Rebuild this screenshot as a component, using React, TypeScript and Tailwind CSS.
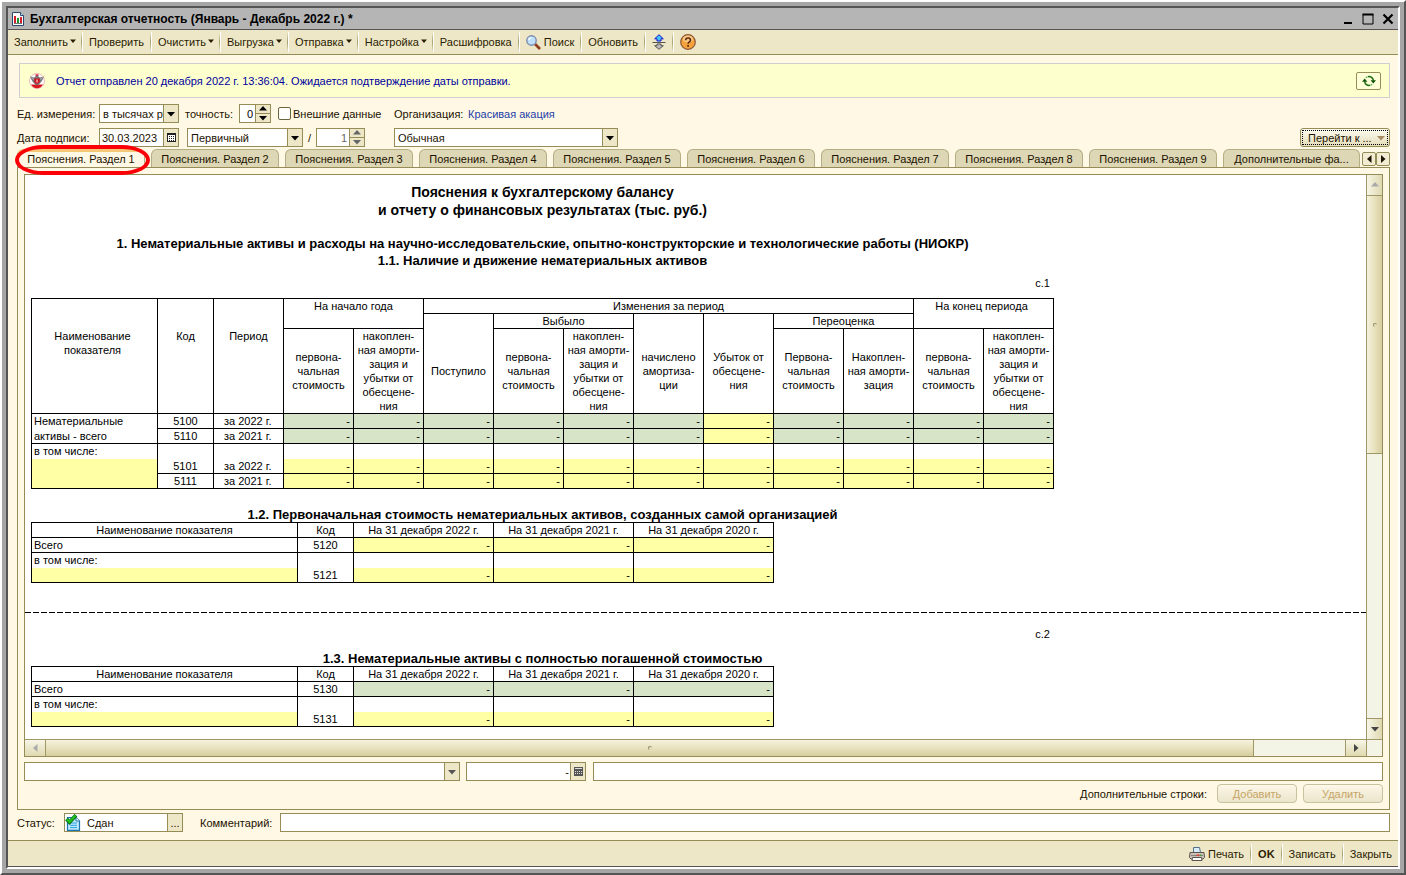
import { useState, type ReactNode } from "react";

type Fill = "green" | "yellow";

const TABS = [1, 2, 3, 4, 5, 6, 7, 8, 9].map((n) => `Пояснения. Раздел ${n}`);

const FILLS: Record<Fill, string> = {
  green: "bg-[#d7e4c8]",
  yellow: "bg-[#ffffa6]",
};

const CELL = "border-r border-b border-black";
const FIELD = "flex h-[19px] border border-[#968c58] bg-white";
const FIELD_BUTTON = "flex w-[15px] shrink-0 items-center justify-center border-l border-[#968c58] bg-[#ede7c8]";

function Triangle({ dir, className = "size-2" }: { dir: "up" | "down" | "left" | "right"; className?: string }) {
  const paths = {
    up: "M0 5.500h8L4 1z",
    down: "M0 2h8L4 6.500z",
    left: "M6.500 0v8L2 4z",
    right: "M2 0v8l4.500-4z",
  };
  return (
    <svg viewBox="0 0 8 8" className={`shrink-0 fill-current ${className}`}>
      <path d={paths[dir]} />
    </svg>
  );
}

function Separator() {
  return <span className="h-5 w-0.5 shrink-0 border-r border-white bg-linear-to-b from-[#ede7c8] via-[#a59d6a] to-[#ede7c8]" />;
}

function ToolButton({ children, menu, strong }: { children: ReactNode; menu?: boolean; strong?: boolean }) {
  return (
    <button
      type="button"
      className={`flex items-center whitespace-nowrap text-[#2b1c00] ${menu ? "gap-0.5 pr-[5px] pl-1.5" : "gap-[3px] px-1.5"} ${strong ? "font-bold" : ""}`}
    >
      {children}
      {menu && <Triangle dir="down" className="mb-0.5 size-1.5" />}
    </button>
  );
}

function SelectField({ label, options, className, muted }: { label: string; options: string[]; className: string; muted?: boolean }) {
  return (
    <div className={`${FIELD} ${className}`}>
      <select aria-label={label} className="min-w-0 flex-1 appearance-none overflow-hidden bg-white pl-[3px] outline-none">
        {options.map((option) => (
          <option key={option}>{option}</option>
        ))}
      </select>
      <span className={`${FIELD_BUTTON} ${muted ? "text-[#555]" : "text-black"}`}>
        <Triangle dir="down" />
      </span>
    </div>
  );
}

function Spinner({ id, label, value, className, muted }: { id?: string; label?: string; value: string; className: string; muted?: boolean }) {
  return (
    <div className={`${FIELD} ${className} ${muted ? "text-[#666]" : "text-black"}`}>
      <input id={id} aria-label={label} defaultValue={value} className="w-0 flex-1 pr-0.5 text-right outline-none" />
      <span className="flex w-[15px] flex-col border-l border-[#968c58] bg-[#ede7c8]">
        <button type="button" aria-label="Больше" className="flex flex-1 items-center justify-center border-b border-[#968c58]">
          <Triangle dir="up" />
        </button>
        <button type="button" aria-label="Меньше" className="flex flex-1 items-center justify-center">
          <Triangle dir="down" />
        </button>
      </span>
    </div>
  );
}

function ReportIcon() {
  return (
    <svg viewBox="0 0 12 14" className="h-3.5 w-3">
      <path d="M.5.5h8l3 3v10H.5z" fill="#fff" stroke="#2b4a6f" />
      <path d="M8.500.5v3h3" fill="#cfe0ee" stroke="#2b4a6f" />
      <path d="M2 4h2v7H2z" fill="#d3202a" />
      <path d="M5 6h2v5H5z" fill="#17902f" />
      <path d="M8 5h2v6H8z" fill="#d3202a" />
      <path d="M2 11.500h8" stroke="#777" />
    </svg>
  );
}

function SearchIcon() {
  return (
    <svg viewBox="0 0 15 15" className="size-[15px]">
      <path d="M9 9l5 5" stroke="#8f3d1d" strokeWidth="2.600" />
      <circle cx="5.500" cy="5.500" r="4.700" fill="#bfe0fb" stroke="#7d8cab" strokeWidth="1.400" />
      <path d="M2.800 5.200a3 3 0 012.600-2.600" stroke="#fff" strokeWidth="1.400" fill="none" />
    </svg>
  );
}

function ExpandIcon() {
  return (
    <svg viewBox="0 0 14 16" className="h-4 w-3.5">
      <path d="M7 .7l4.300 4.100H9v2.200H5V4.800H2.700z" fill="#45c2f5" stroke="#1414d2" />
      <path d="M.5 8.500h13" stroke="#555" />
      <path d="M7 15.300l4.300-3.600H9V10H5v1.700H2.700z" fill="#bbb" stroke="#555" />
    </svg>
  );
}

function HelpIcon() {
  return (
    <svg viewBox="0 0 16 16" className="size-4">
      <circle cx="8" cy="8" r="7.300" fill="#f6a23c" stroke="#8a5637" strokeWidth="1.200" />
      <ellipse cx="8" cy="5" rx="5.200" ry="3.600" fill="#fcd9a0" opacity=".7" />
      <path d="M5.700 6.200c0-3 4.800-3 4.800 0 0 1.700-2.400 1.700-2.400 3.600" fill="none" stroke="#5d2a12" strokeWidth="1.600" />
      <path d="M7.200 11h1.800v1.700H7.200z" fill="#5d2a12" />
    </svg>
  );
}

function EmblemIcon() {
  return (
    <svg viewBox="0 0 16 16" className="size-4">
      <circle cx="8" cy="8" r="7.500" fill="#fff" stroke="#f1b9b9" />
      <path d="M2 11.500h12A7 7 0 018 15.300 7 7 0 012 11.500z" fill="#d9161d" />
      <path d="M1 3.500l4.200 1L7 3h2l1.800 1.500L15 3.500l-1.500 3.200-1 1.800-1.300 1.500L9.500 12h-3L4.800 10 3.500 8.500l-1-1.800z" fill="#77777d" />
      <path d="M2.500 4.500l2.500 2M13.500 4.500l-2.500 2" stroke="#ddd" strokeWidth=".7" />
      <path d="M5.300 5.500h5.400V9L8 11.300 5.300 9z" fill="#d30f18" />
      <path d="M8 6.500v3" stroke="#fff" />
      <path d="M6.500 1.300h3v1.800h-3z" fill="#c9343a" />
    </svg>
  );
}

function RefreshIcon() {
  return (
    <svg viewBox="0 0 14 12" className="h-3 w-3.5">
      <path d="M2.700 6.500A4.300 4.300 0 008 10.300M11.300 5.500A4.300 4.300 0 006 1.700" fill="none" stroke="#1c6b12" strokeWidth="1.600" />
      <path d="M0 6.800h5.400L2.700 3.600zM8.600 5.200H14l-2.700 3.200z" fill="#0b5204" />
      <path d="M8.500 10.200l1.700-1M5.500 1.800l-1.700 1" stroke="#57a94b" strokeWidth="1.300" />
    </svg>
  );
}

function CalendarIcon() {
  return (
    <svg viewBox="0 0 9 9" className="size-[9px]" shapeRendering="crispEdges">
      <path d="M0 0h9v9H0z" fill="#222" />
      <path d="M1 2h7v6H1z" fill="#fff" />
      <path d="M2 3h1v1H2zM4 3h1v1H4zM6 3h1v1H6zM2 5h1v1H2zM4 5h1v1H4zM6 5h1v1H6zM2 7h1v1H2zM4 7h1v1H4zM6 7h1v1H6z" fill="#222" />
    </svg>
  );
}

function CalculatorIcon() {
  return (
    <svg viewBox="0 0 9 9" className="size-[9px]" shapeRendering="crispEdges">
      <path d="M0 0h9v9H0z" fill="#555" />
      <path d="M1 1h7v1H1zM1 4h1v1H1zM3 4h1v1H3zM5 4h1v1H5zM7 4h1v1H7zM1 6h1v1H1zM3 6h1v1H3zM5 6h1v1H5zM7 6h1v1H7z" fill="#ddd" />
    </svg>
  );
}

function StatusIcon() {
  return (
    <svg viewBox="0 0 16 17" className="h-[17px] w-4 shrink-0">
      <path d="M2.500 3.500h8.500l3.500 3.500v9.300h-12z" fill="#bfe9fd" stroke="#1b74ae" strokeWidth="1.200" />
      <path d="M11 3.500V7h3.500" fill="#fff" stroke="#1b74ae" />
      <path d="M5 9h7M5 11.300h7M5 13.600h7" stroke="#2ba0e2" />
      <path d="M1.500 5l3 3.300L11 1.200" fill="none" stroke="#0b6d10" strokeWidth="3.800" />
      <path d="M1.800 5.200l2.700 2.700 6-6.400" fill="none" stroke="#1fc41f" strokeWidth="2.200" />
    </svg>
  );
}

function PrinterIcon() {
  return (
    <svg viewBox="0 0 16 14" className="h-3.5 w-4">
      <path d="M4.500.5h6l1 5h-7z" fill="#d8ecfb" stroke="#55708c" />
      <path d="M1 5.500h14l.5 5-1.500 1.500H2L.5 10.500z" fill="#cdc6bd" stroke="#5b534c" />
      <path d="M2 8.500h12" stroke="#8b8178" strokeWidth="1.200" />
      <path d="M3.500 10.500h9l.5 3H3z" fill="#fff" stroke="#5b534c" />
      <path d="M7.500 7.500h3v1.300h-3z" fill="#e0392b" />
      <path d="M11 7.500h1.500v1.300H11z" fill="#39a93b" />
    </svg>
  );
}

function Values({ fills }: { fills: Fill[] }) {
  return (
    <>
      {fills.map((fill, i) => (
        <td key={i} className={`${CELL} ${FILLS[fill]} pr-[3px] text-right`}>
          -
        </td>
      ))}
    </>
  );
}

function BlankCells({ count }: { count: number }) {
  return (
    <>
      {Array.from({ length: count }, (_, i) => (
        <td key={i} className="border-r border-black" />
      ))}
    </>
  );
}

function Lines({ text }: { text: string }) {
  return (
    <>
      {text.split("|").map((line) => (
        <span key={line} className="block leading-[14px] whitespace-nowrap">
          {line}
        </span>
      ))}
    </>
  );
}

const TOTAL_FILLS: Fill[] = Array.from({ length: 11 }, (_, i) => (i === 6 ? "yellow" : "green"));
const DETAIL_FILLS: Fill[] = Array.from({ length: 11 }, () => "yellow");
const ACCUMULATED = "накоплен-|ная аморти-|зация и|убытки от|обесцене-|ния";

function AssetsTable() {
  const head = `${CELL} font-normal`;
  return (
    <table className="w-[1023px] table-fixed border-separate border-spacing-0 border-t border-l border-black leading-[14px]">
      <colgroup>
        <col className="w-[126px]" />
        <col className="w-14" />
        <col className="w-[70px]" />
        {TOTAL_FILLS.map((_, i) => (
          <col key={i} className="w-[70px]" />
        ))}
      </colgroup>
      <thead>
        <tr className="h-[15px]">
          <th rowSpan={3} className={`${head} pt-[30px] pr-1 align-top`}><Lines text="Наименование|показателя" /></th>
          <th rowSpan={3} className={`${head} pt-[30px] align-top`}>Код</th>
          <th rowSpan={3} className={`${head} pt-[30px] align-top`}>Период</th>
          <th colSpan={2} rowSpan={2} className={`${head} align-top`}>На начало года</th>
          <th colSpan={7} className={head}>Изменения за период</th>
          <th colSpan={2} rowSpan={2} className={`${head} pr-1 align-top`}>На конец периода</th>
        </tr>
        <tr className="h-[15px]">
          <th rowSpan={2} className={`${head} pt-[15px]`}>Поступило</th>
          <th colSpan={2} className={head}>Выбыло</th>
          <th rowSpan={2} className={`${head} pt-[15px]`}><Lines text="начислено|амортиза-|ции" /></th>
          <th rowSpan={2} className={`${head} pt-[15px]`}><Lines text="Убыток от|обесцене-|ния" /></th>
          <th colSpan={2} className={head}>Переоценка</th>
        </tr>
        <tr className="h-[85px]">
          <th className={head}><Lines text="первона-|чальная|стоимость" /></th>
          <th className={head}><Lines text={ACCUMULATED} /></th>
          <th className={head}><Lines text="первона-|чальная|стоимость" /></th>
          <th className={head}><Lines text={ACCUMULATED} /></th>
          <th className={head}><Lines text="Первона-|чальная|стоимость" /></th>
          <th className={head}><Lines text="Накоплен-|ная аморти-|зация" /></th>
          <th className={head}><Lines text="первона-|чальная|стоимость" /></th>
          <th className={head}><Lines text={ACCUMULATED} /></th>
        </tr>
      </thead>
      <tbody>
        <tr className="h-[15px]">
          <td className="border-r border-black pl-0.5 align-top">Нематериальные</td>
          <td className={`${CELL} text-center`}>5100</td>
          <td className={`${CELL} pl-2.5`}>за 2022 г.</td>
          <Values fills={TOTAL_FILLS} />
        </tr>
        <tr className="h-[15px]">
          <td className={`${CELL} pl-0.5`}>активы - всего</td>
          <td className={`${CELL} text-center`}>5110</td>
          <td className={`${CELL} pl-2.5`}>за 2021 г.</td>
          <Values fills={TOTAL_FILLS} />
        </tr>
        <tr className="h-[15px]">
          <td className="border-r border-black pl-0.5 align-top">в том числе:</td>
          <BlankCells count={13} />
        </tr>
        <tr className="h-[15px]">
          <td rowSpan={2} className={`${CELL} bg-[#ffffa6]`} />
          <td className={`${CELL} text-center`}>5101</td>
          <td className={`${CELL} pl-2.5`}>за 2022 г.</td>
          <Values fills={DETAIL_FILLS} />
        </tr>
        <tr className="h-[15px]">
          <td className={`${CELL} text-center`}>5111</td>
          <td className={`${CELL} pl-2.5`}>за 2021 г.</td>
          <Values fills={DETAIL_FILLS} />
        </tr>
      </tbody>
    </table>
  );
}

function CostTable({ total, detail, totalFill }: { total: string; detail: string; totalFill: Fill }) {
  return (
    <table className="w-[743px] table-fixed border-separate border-spacing-0 border-t border-l border-black leading-[14px]">
      <colgroup>
        <col className="w-[266px]" />
        <col className="w-14" />
        <col className="w-[140px]" />
        <col className="w-[140px]" />
        <col className="w-[140px]" />
      </colgroup>
      <thead>
        <tr className="h-[15px]">
          {["Наименование показателя", "Код", "На 31 декабря 2022 г.", "На 31 декабря 2021 г.", "На 31 декабря 2020 г."].map((title) => (
            <th key={title} className={`${CELL} font-normal`}>
              {title}
            </th>
          ))}
        </tr>
      </thead>
      <tbody>
        <tr className="h-[15px]">
          <td className={`${CELL} pl-0.5`}>Всего</td>
          <td className={`${CELL} text-center`}>{total}</td>
          <Values fills={[totalFill, totalFill, totalFill]} />
        </tr>
        <tr className="h-[15px]">
          <td className="border-r border-black pl-0.5 align-top">в том числе:</td>
          <BlankCells count={4} />
        </tr>
        <tr className="h-[15px]">
          <td className={`${CELL} bg-[#ffffa6]`} />
          <td className={`${CELL} text-center`}>{detail}</td>
          <Values fills={["yellow", "yellow", "yellow"]} />
        </tr>
      </tbody>
    </table>
  );
}

function ReportSheet() {
  return (
    <div className="min-w-0 flex-1 overflow-hidden bg-white text-black">
      <div className="w-[1029px] pl-1.5">
        <div className="pt-2 text-center text-[14px] leading-[18px] font-bold">
          <div>Пояснения к бухгалтерскому балансу</div>
          <div>и отчету о финансовых результатах (тыс. руб.)</div>
        </div>
        <div className="mt-4 text-center text-[13px] leading-[17px] font-bold">
          <div className="whitespace-nowrap">
            1. Нематериальные активы и расходы на научно-исследовательские, опытно-конструкторские и технологические работы (НИОКР)
          </div>
          <div>1.1. Наличие и движение нематериальных активов</div>
        </div>
        <div className="mt-[7px] mb-2 pr-1 text-right leading-[14px]">с.1</div>
        <AssetsTable />
        <div className="mt-[18px] text-center text-[13px] leading-[15px] font-bold">
          1.2. Первоначальная стоимость нематериальных активов, созданных самой организацией
        </div>
        <CostTable total="5120" detail="5121" totalFill="yellow" />
      </div>
      <div className="mt-[29px] h-px bg-[repeating-linear-gradient(90deg,#000_0_6px,transparent_6px_8px)]" />
      <div className="w-[1029px] pl-1.5">
        <div className="mt-3.5 mb-2.5 pr-1 text-right leading-[14px]">с.2</div>
        <div className="text-center text-[13px] leading-[15px] font-bold">1.3. Нематериальные активы с полностью погашенной стоимостью</div>
        <CostTable total="5130" detail="5131" totalFill="green" />
      </div>
    </div>
  );
}

function VerticalScrollbar() {
  const button = "flex h-[21px] items-center justify-center bg-linear-to-r from-[#f7f5e6] to-[#dfd9b0]";
  return (
    <div className="flex w-4 shrink-0 flex-col border-l border-[#a09766] bg-[#f3f3e6]">
      <button type="button" aria-label="Вверх" className={`${button} border-b border-[#a09766] text-[#aaa]`}>
        <Triangle dir="up" />
      </button>
      <div className="flex h-[258px] items-center justify-center border-b border-[#a09766] bg-linear-to-r from-[#f5f2de] via-[#e8e2bd] to-[#d6ce9f]">
        <span className="size-1 rounded-full border-t border-l border-[#9a9370]" />
      </div>
      <div className="flex-1" />
      <button type="button" aria-label="Вниз" className={`${button} border-t border-[#a09766] text-[#444]`}>
        <Triangle dir="down" />
      </button>
    </div>
  );
}

function HorizontalScrollbar() {
  const button = "flex w-[21px] items-center justify-center bg-linear-to-b from-[#f7f5e6] to-[#dfd9b0]";
  return (
    <div className="flex h-[17px] border-t border-[#a09766] bg-[#f3f3e6]">
      <button type="button" aria-label="Влево" className={`${button} border-r border-[#a09766] text-[#aaa]`}>
        <Triangle dir="left" />
      </button>
      <div className="flex flex-[93] items-center justify-center border-r border-[#a09766] bg-linear-to-b from-[#f5f2de] via-[#e8e2bd] to-[#d6ce9f]">
        <span className="size-1 rounded-full border-t border-l border-[#9a9370]" />
      </div>
      <div className="flex-[7]" />
      <button type="button" aria-label="Вправо" className={`${button} border-l border-[#a09766] text-[#444]`}>
        <Triangle dir="right" />
      </button>
      <span className="w-4 border-l border-[#a09766]" />
    </div>
  );
}

export default function App() {
  const [activeTab, setActiveTab] = useState(0);

  const tabClass = (index: number) =>
    `h-[18px] shrink-0 rounded-t-[6px] border border-b-0 text-center whitespace-nowrap ${
      activeTab === index
        ? "border-t-[3px] border-[#b5ad84] border-t-[#f5c878] bg-[#fff8e5] leading-[13px]"
        : "border-[#b5ad84] bg-[#ddd7b5] pt-px leading-4"
    }`;

  const rowButton =
    "h-[19px] w-20 rounded-[4px] border border-[#c9c29f] bg-linear-to-b from-[#fdf8e8] to-[#eae5cb] text-[#c6a466]";

  return (
    <div className="flex min-h-screen flex-col border-2 border-t-white border-r-[#555] border-b-[#555] border-l-white font-['Liberation_Sans',Arial,sans-serif] text-[11px] leading-[14px] text-[#1c1200]">
      <div className="flex flex-1 flex-col border-4 border-[#a6a6a6]">
        <div className="flex flex-1 flex-col border-2 border-t-[#555] border-r-white border-b-white border-l-[#555]">
          <header className="flex h-[22px] items-center gap-1.5 border-b border-[#555] bg-[#b5b5b5] pr-1 pl-1">
            <ReportIcon />
            <h1 className="flex-1 text-[12px] font-bold text-black">Бухгалтерская отчетность (Январь - Декабрь 2022 г.) *</h1>
            <div className="flex gap-2 text-black">
              <button type="button" aria-label="Свернуть">
                <svg viewBox="0 0 12 12" className="size-3"><path d="M2 10h8" stroke="currentColor" strokeWidth="2" /></svg>
              </button>
              <button type="button" aria-label="Развернуть">
                <svg viewBox="0 0 12 12" className="size-3"><path d="M1 1.500h10v9.500H1z" fill="none" stroke="currentColor" /><path d="M.5 1.500h11" stroke="currentColor" strokeWidth="2" /></svg>
              </button>
              <button type="button" aria-label="Закрыть окно">
                <svg viewBox="0 0 12 12" className="size-3"><path d="M1.500 1.500l9 9M10.500 1.500l-9 9" stroke="currentColor" strokeWidth="2.200" /></svg>
              </button>
            </div>
          </header>

          <div className="flex h-[25px] items-center border-b border-[#968c58] bg-[#ede7c8]">
            <ToolButton menu>Заполнить</ToolButton>
            <Separator />
            <ToolButton>Проверить</ToolButton>
            <Separator />
            <ToolButton menu>Очистить</ToolButton>
            <Separator />
            <ToolButton menu>Выгрузка</ToolButton>
            <Separator />
            <ToolButton menu>Отправка</ToolButton>
            <Separator />
            <ToolButton menu>Настройка</ToolButton>
            <Separator />
            <ToolButton>Расшифровка</ToolButton>
            <Separator />
            <ToolButton><SearchIcon />Поиск</ToolButton>
            <Separator />
            <ToolButton>Обновить</ToolButton>
            <Separator />
            <ToolButton><ExpandIcon /></ToolButton>
            <Separator />
            <ToolButton><HelpIcon /></ToolButton>
          </div>

          <main className="flex flex-1 flex-col bg-[#fff8e5] pt-2 pr-2 pb-2 pl-[9px]">
            <div className="ml-0.5 flex h-[35px] items-center border border-[#cfcfcf] bg-[#fdffcd] pr-2 pl-[9px] text-[#0000a0]">
              <EmblemIcon />
              <span className="ml-[11px] flex-1">Отчет отправлен 20 декабря 2022 г. 13:36:04. Ожидается подтверждение даты отправки.</span>
              <button type="button" aria-label="Обновить статус" className="flex h-[18px] w-[25px] items-center justify-center rounded-[2px] border border-[#968c58] bg-[#ffffd8]">
                <RefreshIcon />
              </button>
            </div>

            <div className="mt-1.5 flex h-[19px] items-center">
              <span className="w-[82px] whitespace-nowrap">Ед. измерения:</span>
              <SelectField label="Единица измерения" options={["в тысячах рублей", "в миллионах рублей"]} className="w-20" />
              <label htmlFor="precision" className="ml-1.5 w-[54px]">точность:</label>
              <Spinner id="precision" value="0" className="w-8" />
              <label className="ml-[7px] flex w-[116px] items-center gap-0.5 whitespace-nowrap">
                <input type="checkbox" className="size-[13px] appearance-none rounded-[2px] border border-[#6b6540] bg-white checked:bg-[#968c58]" />
                Внешние данные
              </label>
              <span className="w-[74px]">Организация:</span>
              <a href="#organization" className="text-[#2340a8]">Красивая акация</a>
            </div>

            <div className="mt-[5px] flex h-[19px] items-center">
              <label htmlFor="sign-date" className="w-[82px] whitespace-nowrap">Дата подписи:</label>
              <div className={`${FIELD} w-20`}>
                <input id="sign-date" defaultValue="30.03.2023" className="w-0 flex-1 pl-0.5 outline-none" />
                <button type="button" aria-label="Выбрать дату" className={FIELD_BUTTON}><CalendarIcon /></button>
              </div>
              <SelectField label="Вид отчета" options={["Первичный", "Корректирующий"]} className="ml-2 w-[116px]" />
              <span className="w-[13px] text-center">/</span>
              <Spinner label="Номер корректировки" value="1" className="w-[49px]" muted />
              <SelectField label="Форма отчета" options={["Обычная", "Упрощенная"]} className="ml-[29px] w-56" />
              <button type="button" className="ml-auto h-[19px] w-[90px] rounded-[3px] border border-[#968c58] bg-linear-to-b from-[#fdfbf0] to-[#e4deb9] p-px">
                <span className="flex h-full items-center justify-between border border-dotted border-black pr-0.5 pl-[5px] whitespace-nowrap">
                  Перейти к ...
                  <Triangle dir="down" className="size-2 text-[#a88a60]" />
                </span>
              </button>
            </div>

            <div role="tablist" className="relative mt-0.5 flex gap-1.5">
              {TABS.map((tab, index) => (
                <button key={tab} type="button" role="tab" aria-selected={activeTab === index} onClick={() => setActiveTab(index)} className={`${tabClass(index)} w-32`}>
                  {tab}
                </button>
              ))}
              <button type="button" role="tab" aria-selected={activeTab === 9} onClick={() => setActiveTab(9)} className={`${tabClass(9)} w-[137px]`}>
                Дополнительные фа...
              </button>
              <div className="-ml-1 flex flex-1 items-center justify-end pt-0.5">
                <button type="button" aria-label="Предыдущие закладки" className="flex size-3.5 items-center justify-center rounded-[2px] border border-[#968c58] bg-[#f2edd2]"><Triangle dir="left" /></button>
                <button type="button" aria-label="Следующие закладки" className="flex size-3.5 items-center justify-center rounded-[2px] border border-[#968c58] bg-[#f2edd2]"><Triangle dir="right" /></button>
              </div>
              {/* marker around the first section */}
              <span className="pointer-events-none absolute -top-1 -left-0.5 z-10 h-[30px] w-[135px] rounded-[28px/15px] border-4 border-[#fb0007]" />
            </div>

            <section className="flex flex-1 flex-col border border-[#968c58] p-1.5">
              <div className="flex flex-1 flex-col border border-[#968c58]">
                <div className="flex flex-1">
                  <ReportSheet />
                  <VerticalScrollbar />
                </div>
                <HorizontalScrollbar />
              </div>

              <div className="mt-[5px] flex">
                <SelectField label="Показатель" options={[""]} className="w-[436px]" muted />
                <div className={`${FIELD} ml-1.5 w-[120px]`}>
                  <input aria-label="Значение" defaultValue="-" className="w-0 flex-1 pr-px text-right outline-none" />
                  <button type="button" aria-label="Калькулятор" className={FIELD_BUTTON}><CalculatorIcon /></button>
                </div>
                <input aria-label="Расшифровка значения" className="ml-[7px] h-[19px] min-w-0 flex-1 border border-[#968c58] bg-white" />
              </div>

              <div className="mt-[3px] flex items-center justify-end gap-1.5">
                <span className="mr-1">Дополнительные строки:</span>
                <button type="button" disabled className={rowButton}>Добавить</button>
                <button type="button" disabled className={rowButton}>Удалить</button>
              </div>
            </section>

            <div className="mt-[3px] flex items-center">
              <label htmlFor="status" className="w-[47px]">Статус:</label>
              <div className={`${FIELD} w-[119px]`}>
                <StatusIcon />
                <input id="status" defaultValue="Сдан" className="w-0 flex-1 pl-1.5 outline-none" />
                <button type="button" aria-label="Выбрать статус" className={FIELD_BUTTON}>...</button>
              </div>
              <label htmlFor="comment" className="ml-[17px] w-20">Комментарий:</label>
              <input id="comment" className="h-[19px] min-w-0 flex-1 border border-[#968c58] bg-white" />
            </div>
          </main>

          <footer className="flex h-[27px] items-center justify-end border-t border-b border-t-[#968c58] border-b-[#555] bg-[#ede7c8]">
            <ToolButton><PrinterIcon />Печать</ToolButton>
            <Separator />
            <ToolButton strong>OK</ToolButton>
            <Separator />
            <ToolButton>Записать</ToolButton>
            <Separator />
            <ToolButton>Закрыть</ToolButton>
          </footer>
        </div>
      </div>
    </div>
  );
}
